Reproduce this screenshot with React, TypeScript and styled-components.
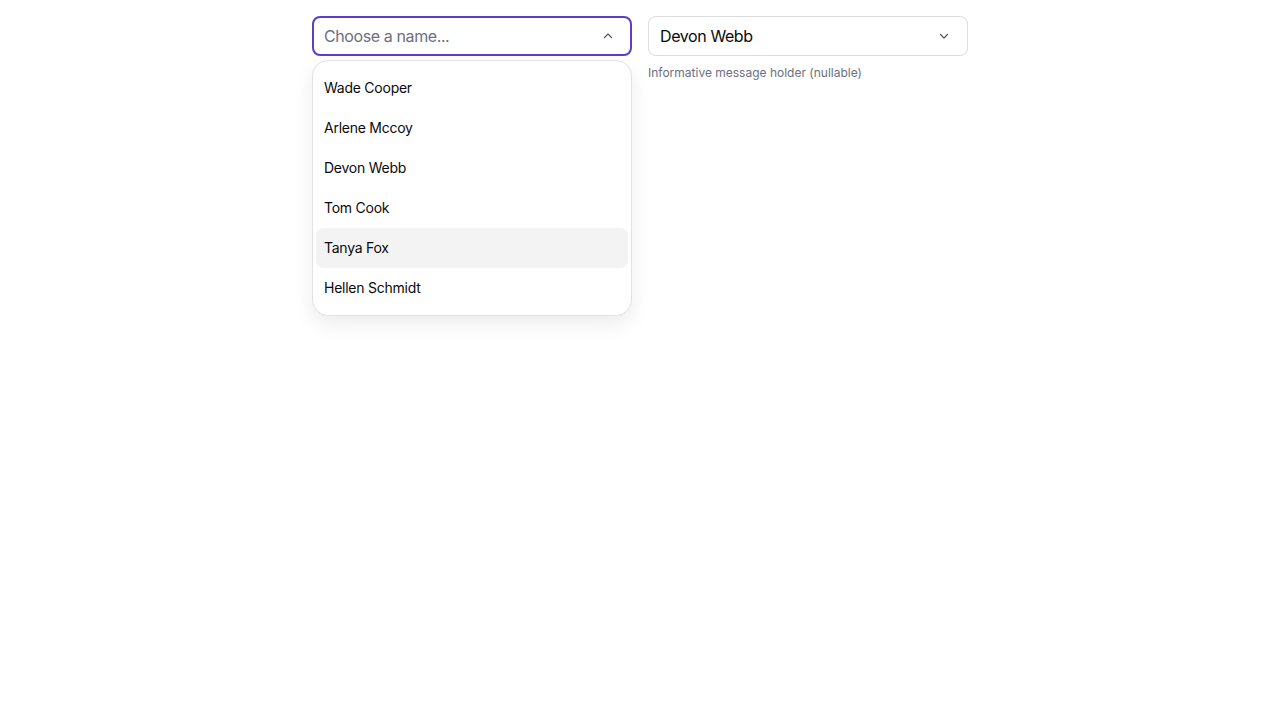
import React from 'react';
import styled, { createGlobalStyle } from 'styled-components';

const GlobalStyle = createGlobalStyle`
  html, body, #root {
    height: 100%;
  }
  body {
    margin: 0;
    background: #ffffff;
    font-family: Inter, "Noto Sans", sans-serif;
    color: #111111;
  }
`;

const Page = styled.div`
  min-height: 100%;
  display: flex;
  justify-content: center;
  align-items: flex-start;
  gap: 16px;
  padding-top: 16px;
  box-sizing: border-box;
`;

const Field = styled.div`
  position: relative;
  width: 320px;
  display: flex;
  flex-direction: column;
`;

const Control = styled.div<{ $focused?: boolean }>`
  box-sizing: border-box;
  height: 40px;
  display: flex;
  align-items: center;
  justify-content: space-between;
  padding: 0 ${({ $focused }) => ($focused ? '14px' : '15px')} 0 ${({ $focused }) => ($focused ? '10px' : '11px')};
  border: ${({ $focused }) => ($focused ? '2px solid #5b3dc9' : '1px solid #dcdce0')};
  border-radius: 8px;
  background: #fff;
  font-size: 16px;
  letter-spacing: -0.4px;
`;

const Value = styled.span<{ $placeholder?: boolean }>`
  color: ${({ $placeholder }) => ($placeholder ? '#6b6f80' : '#0a0a0a')};
`;

const Chevron = styled.svg`
  width: 16px;
  height: 16px;
  color: #555a66;
  flex-shrink: 0;
`;

const Helper = styled.div`
  margin-top: 9px;
  font-size: 12px;
  line-height: 16px;
  color: #6b6f80;
`;

const Menu = styled.ul`
  position: absolute;
  top: 44px;
  left: 0;
  width: 320px;
  margin: 0;
  padding: 7px 3px;
  list-style: none;
  background: #fff;
  border: 1px solid #e2e2e6;
  border-radius: 16px;
  box-shadow: 0 8px 20px rgba(0, 0, 0, 0.08);
  box-sizing: border-box;
  z-index: 10;
`;

const Option = styled.li<{ $active?: boolean }>`
  box-sizing: border-box;
  height: 40px;
  display: flex;
  align-items: center;
  padding: 0 8px 2px;
  border-radius: 8px;
  font-size: 14px;
  letter-spacing: -0.25px;
  color: #0a0a0a;
  background: ${({ $active }) => ($active ? '#f3f3f4' : 'transparent')};
`;

const ChevronIcon: React.FC<{ up?: boolean }> = ({ up }) => (
  <Chevron viewBox="0 0 16 16" fill="none" stroke="currentColor" strokeWidth={1.2} strokeLinecap="round" strokeLinejoin="round">
    {up ? <path d="M4.5 9.5 8 6l3.5 3.5" /> : <path d="M4.5 6.5 8 10l3.5-3.5" />}
  </Chevron>
);

const people = ['Wade Cooper', 'Arlene Mccoy', 'Devon Webb', 'Tom Cook', 'Tanya Fox', 'Hellen Schmidt'];

export default function App() {
  return (
    <>
      <GlobalStyle />
      <Page>
        <Field>
          <Control $focused>
            <Value $placeholder>Choose a name...</Value>
            <ChevronIcon up />
          </Control>
          <Menu>
            {people.map(name => (
              <Option key={name} $active={name === 'Tanya Fox'}>
                {name}
              </Option>
            ))}
          </Menu>
        </Field>
        <Field>
          <Control>
            <Value>Devon Webb</Value>
            <ChevronIcon />
          </Control>
          <Helper>Informative message holder (nullable)</Helper>
        </Field>
      </Page>
    </>
  );
}
